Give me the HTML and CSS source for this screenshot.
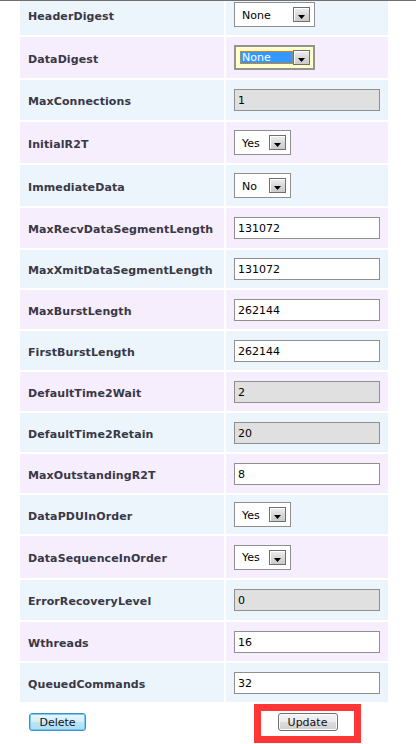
FILE: index.html
```html
<!DOCTYPE html>
<html>
<head>
<meta charset="utf-8">
<link rel="stylesheet" href="styles.css">
</head>
<body>
<div class="topline"></div>
<div class="viewport">
  <div class="form">
    <div class="cell label blue">HeaderDigest</div>
    <div class="cell value blue"><div class="select wide"><span class="opt">None</span><span class="drop"><svg width="7" height="4" viewBox="0 0 7 4"><path d="M0 0h7L3.5 4z"/></svg></span></div></div>

    <div class="cell label purple">DataDigest</div>
    <div class="cell value purple"><div class="select wide focus"><span class="opt sel">None</span><span class="drop"><svg width="7" height="4" viewBox="0 0 7 4"><path d="M0 0h7L3.5 4z"/></svg></span></div></div>

    <div class="cell label blue">MaxConnections</div>
    <div class="cell value blue"><input class="field" type="text" value="1" disabled></div>

    <div class="cell label purple">InitialR2T</div>
    <div class="cell value purple"><div class="select narrow"><span class="opt">Yes</span><span class="drop"><svg width="7" height="4" viewBox="0 0 7 4"><path d="M0 0h7L3.5 4z"/></svg></span></div></div>

    <div class="cell label blue">ImmediateData</div>
    <div class="cell value blue"><div class="select narrow"><span class="opt">No</span><span class="drop"><svg width="7" height="4" viewBox="0 0 7 4"><path d="M0 0h7L3.5 4z"/></svg></span></div></div>

    <div class="cell label purple">MaxRecvDataSegmentLength</div>
    <div class="cell value purple"><input class="field" type="text" value="131072"></div>

    <div class="cell label blue">MaxXmitDataSegmentLength</div>
    <div class="cell value blue"><input class="field" type="text" value="131072"></div>

    <div class="cell label purple">MaxBurstLength</div>
    <div class="cell value purple"><input class="field" type="text" value="262144"></div>

    <div class="cell label blue">FirstBurstLength</div>
    <div class="cell value blue"><input class="field" type="text" value="262144"></div>

    <div class="cell label purple">DefaultTime2Wait</div>
    <div class="cell value purple"><input class="field" type="text" value="2" disabled></div>

    <div class="cell label blue">DefaultTime2Retain</div>
    <div class="cell value blue"><input class="field" type="text" value="20" disabled></div>

    <div class="cell label purple">MaxOutstandingR2T</div>
    <div class="cell value purple"><input class="field" type="text" value="8"></div>

    <div class="cell label blue">DataPDUInOrder</div>
    <div class="cell value blue"><div class="select narrow"><span class="opt">Yes</span><span class="drop"><svg width="7" height="4" viewBox="0 0 7 4"><path d="M0 0h7L3.5 4z"/></svg></span></div></div>

    <div class="cell label purple">DataSequenceInOrder</div>
    <div class="cell value purple"><div class="select narrow"><span class="opt">Yes</span><span class="drop"><svg width="7" height="4" viewBox="0 0 7 4"><path d="M0 0h7L3.5 4z"/></svg></span></div></div>

    <div class="cell label blue">ErrorRecoveryLevel</div>
    <div class="cell value blue"><input class="field" type="text" value="0" disabled></div>

    <div class="cell label purple">Wthreads</div>
    <div class="cell value purple"><input class="field" type="text" value="16"></div>

    <div class="cell label blue">QueuedCommands</div>
    <div class="cell value blue"><input class="field" type="text" value="32"></div>

    <div class="cell actions-left"><button class="btn btn-delete">Delete</button></div>
    <div class="cell actions-right"><span class="mark"><button class="btn btn-update">Update</button></span></div>
  </div>
</div>
</body>
</html>
```
FILE: styles.css
```css
html, body {
  margin: 0;
  padding: 0;
  background: #ffffff;
}

body {
  width: 416px;
  height: 744px;
  overflow: hidden;
  font-family: "DejaVu Sans", Verdana, sans-serif;
}

.topline {
  height: 1px;
  background: #6f6f6f;
}

.viewport {
  overflow: hidden;
  height: 743px;
}

.form {
  margin: -7px 0 0 20px;
  display: grid;
  grid-template-columns: 204px 162px;
  grid-template-rows: 41px 41px 40px 41px 41px 40px 38px 39px 39px 39px 39px 39px 39px 42px 40px 39px 39px 40px;
  gap: 2px;
}

.cell {
  display: flex;
  align-items: center;
  box-sizing: border-box;
}

.blue { background: #ecf4fc; }
.purple { background: #f6edfd; }

.label {
  padding: 3px 0 0 8px;
  font-size: 11px;
  font-weight: bold;
  letter-spacing: 0.1px;
  color: #383846;
  white-space: nowrap;
}

.value {
  padding-left: 8px;
}

.field {
  box-sizing: border-box;
  width: 146px;
  height: 22px;
  margin: 0;
  padding: 1px 3px 0;
  border: 1px solid #8f8f8f;
  border-radius: 0;
  background: #ffffff;
  font-family: "DejaVu Sans", Verdana, sans-serif;
  font-size: 11px;
  color: #000000;
  outline: none;
}

.field:disabled {
  background: #e0e0e0;
  color: #000000;
  -webkit-text-fill-color: #000000;
  opacity: 1;
}

.select {
  box-sizing: border-box;
  display: flex;
  align-items: center;
  justify-content: space-between;
  height: 25px;
  padding: 0 4px 0 7px;
  border: 1px solid #8f8f8f;
  background: #ffffff;
  font-size: 11px;
  color: #000000;
}

.select.wide { width: 81px; }
.select.narrow { width: 57px; }

.select.focus {
  border: 2px solid #939393;
  background: #ffffcc;
  padding: 0 3px 0 4px;
}

.opt {
  line-height: 12px;
  padding-top: 2px;
}

.opt.sel {
  box-sizing: border-box;
  width: 53px;
  height: 13px;
  padding: 1px 0 0 1px;
  line-height: 10px;
  background: #3399ff;
  color: #ffffff;
  border: 1px dotted #d98a2b;
}

.drop {
  box-sizing: border-box;
  width: 17px;
  height: 15px;
  display: flex;
  justify-content: center;
  align-items: flex-start;
  padding-top: 7px;
  border: 1px solid #6f6f6f;
  background: linear-gradient(#f0f0f0, #d9d9d9 50%, #cbcbcb);
  box-shadow: inset 1px 1px 0 #ffffff;
}

.drop svg { display: block; fill: #000000; }

.actions-left {
  align-items: flex-start;
  padding: 9px 0 0 9px;
}

.actions-right {
  justify-content: center;
  align-items: flex-start;
}

.mark {
  display: inline-block;
  border: 7px solid #ff3636;
  padding: 2px 16px 5px 17px;
}

.btn {
  display: block;
  box-sizing: border-box;
  height: 18px;
  margin: 0;
  padding: 0;
  border-radius: 3px;
  font-family: "DejaVu Sans", Verdana, sans-serif;
  font-size: 11px;
  color: #111111;
  line-height: 15px;
}

.btn-delete {
  width: 57px;
  border: 1px solid #3a8fc4;
  box-shadow: inset 0 0 0 1px #7ccaf0;
  background: linear-gradient(#e8f6fd, #d4eefb 50%, #bee5f8 50%, #a9dcf6);
}

.btn-update {
  width: 60px;
  border: 1px solid #707070;
  box-shadow: inset 0 0 0 1px #fbfbfb;
  background: linear-gradient(#f3f3f3, #ebebeb 50%, #dddddd 50%, #cfcfcf);
}
```
